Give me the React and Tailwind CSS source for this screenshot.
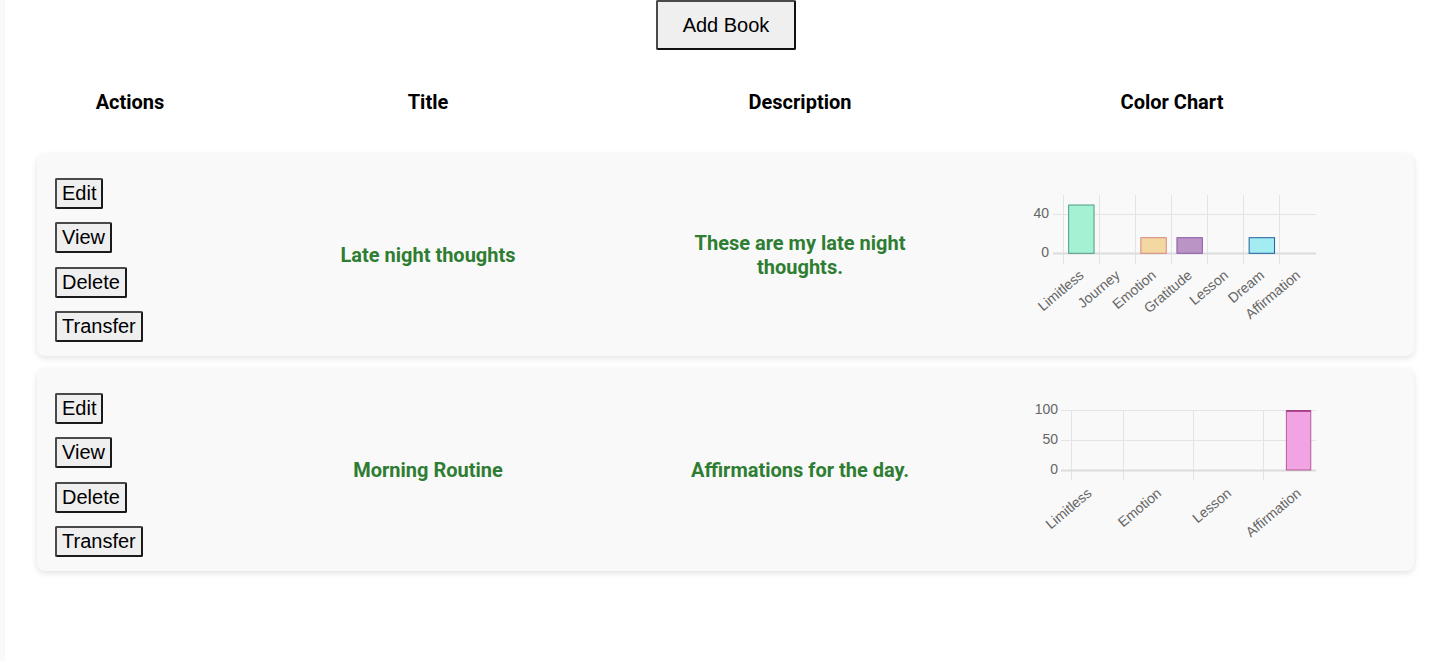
import React from "react";

const LBL = "text-[14px] fill-[#666] font-['Liberation_Sans',Arial,sans-serif]";

function Chart1() {
  const vx = [43.5, 79.5, 115.5, 151.5, 187.5, 223.5, 259.5];
  const cw = 36.1;
  const x0 = 43.3;
  const labels = ["Limitless", "Journey", "Emotion", "Gratitude", "Lesson", "Dream", "Affirmation"];
  const bars = [
    { i: 0, top: 25, fill: "#a4f1d3", stroke: "#4e9c84" },
    { i: 2, top: 57.7, fill: "#f3d8a2", stroke: "#d9867d" },
    { i: 3, top: 57.7, fill: "#b994c5", stroke: "#8a58a6" },
    { i: 5, top: 57.7, fill: "#a3edf2", stroke: "#1f5e9e" },
  ];
  return (
    <svg width="304" height="150" viewBox="0 0 304 150">
      {vx.map((x) => (
        <line key={x} x1={x} y1={15} x2={x} y2={84} stroke="#e4e4e4" strokeWidth="1" />
      ))}
      <line x1={33} y1={34.5} x2={296} y2={34.5} stroke="#e4e4e4" strokeWidth="1" />
      <line x1={33} y1={73.5} x2={296} y2={73.5} stroke="#dcdcdc" strokeWidth="2" />
      {bars.map((b) => {
        const cx = x0 + cw * b.i + cw / 2;
        return (
          <rect key={b.i} x={cx - 12.7} y={b.top} width={25.4} height={73.3 - b.top} fill={b.fill} stroke={b.stroke} strokeWidth="1" />
        );
      })}
      <text x={29} y={34.3} textAnchor="end" dominantBaseline="middle" className={LBL}>40</text>
      <text x={29} y={73.3} textAnchor="end" dominantBaseline="middle" className={LBL}>0</text>
      {labels.map((l, i) => {
        const cx = x0 + cw * i + cw / 2;
        return (
          <text key={l} x={cx + 1} y={94} textAnchor="end" dominantBaseline="middle" transform={`rotate(-40 ${cx + 1} 94)`} className={LBL}>
            {l}
          </text>
        );
      })}
    </svg>
  );
}

function Chart2() {
  const cw = 34.9;
  const x0 = 51.7;
  const vx = [51.5, 103.5, 173.5, 243.5];
  const labels = [
    ["Limitless", 0],
    ["Emotion", 2],
    ["Lesson", 4],
    ["Affirmation", 6],
  ];
  const cxA = x0 + cw * 6 + cw / 2;
  return (
    <svg width="304" height="150" viewBox="0 0 304 150">
      {vx.map((x) => (
        <line key={x} x1={x} y1={15} x2={x} y2={85} stroke="#e4e4e4" strokeWidth="1" />
      ))}
      <line x1={41} y1={15.5} x2={296} y2={15.5} stroke="#e4e4e4" strokeWidth="1" />
      <line x1={41} y1={45.5} x2={296} y2={45.5} stroke="#e4e4e4" strokeWidth="1" />
      <line x1={41} y1={75.5} x2={296} y2={75.5} stroke="#dcdcdc" strokeWidth="2" />
      <rect x={cxA - 12.2} y={15.7} width={24.4} height={59.3} fill="#f1a3e4" stroke="#b35a93" strokeWidth="1" />
      <line x1={cxA - 12.2} y1={16} x2={cxA + 12.2} y2={16} stroke="#9c2f78" strokeWidth="1.5" />
      <text x={38} y={15} textAnchor="end" dominantBaseline="middle" className={LBL}>100</text>
      <text x={38} y={45} textAnchor="end" dominantBaseline="middle" className={LBL}>50</text>
      <text x={38} y={75} textAnchor="end" dominantBaseline="middle" className={LBL}>0</text>
      {labels.map(([l, i]) => {
        const cx = x0 + cw * i + cw / 2;
        return (
          <text key={l} x={cx + 1} y={97} textAnchor="end" dominantBaseline="middle" transform={`rotate(-40 ${cx + 1} 97)`} className={LBL}>
            {l}
          </text>
        );
      })}
    </svg>
  );
}

function ActBtn({ children }) {
  return (
    <button className="self-start h-[31px] px-[5px] text-[20px] leading-[23px] text-black bg-[#efefef] border-2 border-t-[#4a4a4a] border-l-[#4a4a4a] border-r-[#1a1a1a] border-b-[#1a1a1a] rounded-[2px] font-['Liberation_Sans',Arial,sans-serif]">
      {children}
    </button>
  );
}

function Row({ title, desc, chart }) {
  return (
    <div className="h-[202px] rounded-[8px] bg-[#f9f9f9] shadow-[0_2px_6px_rgba(0,0,0,0.12)] pl-[18px] grid grid-cols-[187px_372px_372px_372px] items-center">
      <div className="flex flex-col gap-[13.4px] pt-[24px] pb-[12px] self-stretch">
        <ActBtn>Edit</ActBtn>
        <ActBtn>View</ActBtn>
        <ActBtn>Delete</ActBtn>
        <ActBtn>Transfer</ActBtn>
      </div>
      <div className="text-center text-[20px] leading-[24px] font-bold text-[#2e7d32]">{title}</div>
      <div className="flex justify-center">
        <div className="max-w-[240px] text-center text-[20px] leading-[24px] font-bold text-[#2e7d32]">{desc}</div>
      </div>
      <div className="flex justify-center">{chart}</div>
    </div>
  );
}

export default function App() {
  return (
    <div className="min-h-[661px] bg-white border-l-[5px] border-[#f9f9f9] font-[Roboto,sans-serif] text-black">
      <div className="flex justify-center -ml-[5px]">
        <button className="w-[140px] h-[50px] text-[20px] bg-[#efefef] border-2 border-t-[#4a4a4a] border-l-[#4a4a4a] border-r-[#111] border-b-[#111] rounded-[2px] font-['Liberation_Sans',Arial,sans-serif]">
          Add Book
        </button>
      </div>
      <div className="-ml-[5px] pl-[18px] mt-[40px] grid grid-cols-[224px_372px_372px_372px] text-center text-[20px] leading-[24px] font-bold">
        <div>Actions</div>
        <div>Title</div>
        <div>Description</div>
        <div>Color Chart</div>
      </div>
      <div className="mt-[40px] ml-[32px] mr-[38px] flex flex-col gap-[13px]">
        <Row title="Late night thoughts" desc="These are my late night thoughts." chart={<Chart1 />} />
        <Row title="Morning Routine" desc="Affirmations for the day." chart={<Chart2 />} />
      </div>
    </div>
  );
}
